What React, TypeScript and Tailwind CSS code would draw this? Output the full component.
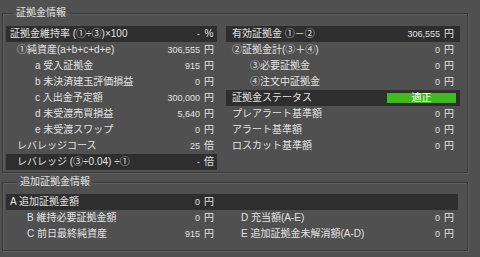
type Row = {
	label: string;
	value?: string;
	unit?: string;
	indent: string;
	dark?: boolean;
	status?: string;
};

const LEFT_ROWS: Row[] = [
	{ label: "証拠金維持率 (①÷③)×100", value: "-", unit: "%", indent: "pl-[4px]", dark: true },
	{ label: "①純資産(a+b+c+d+e)", value: "306,555", unit: "円", indent: "pl-[11px]" },
	{ label: "a 受入証拠金", value: "915", unit: "円", indent: "pl-[29px]" },
	{ label: "b 未決済建玉評価損益", value: "0", unit: "円", indent: "pl-[29px]" },
	{ label: "c 入出金予定額", value: "300,000", unit: "円", indent: "pl-[29px]" },
	{ label: "d 未受渡売買損益", value: "5,640", unit: "円", indent: "pl-[29px]" },
	{ label: "e 未受渡スワップ", value: "0", unit: "円", indent: "pl-[29px]" },
	{ label: "レバレッジコース", value: "25", unit: "倍", indent: "pl-[11px]" },
	{ label: "レバレッジ (③÷0.04) ÷①", value: "-", unit: "倍", indent: "pl-[11px]", dark: true },
];

const RIGHT_ROWS: Row[] = [
	{ label: "有効証拠金 ①－②", value: "306,555", unit: "円", indent: "pl-[6px]", dark: true },
	{ label: "②証拠金計(③＋④)", value: "0", unit: "円", indent: "pl-[6px]" },
	{ label: "③必要証拠金", value: "0", unit: "円", indent: "pl-[24px]" },
	{ label: "④注文中証拠金", value: "0", unit: "円", indent: "pl-[24px]" },
	{ label: "証拠金ステータス", status: "適正", indent: "pl-[6px]", dark: true },
	{ label: "プレアラート基準額", value: "0", unit: "円", indent: "pl-[6px]" },
	{ label: "アラート基準額", value: "0", unit: "円", indent: "pl-[6px]" },
	{ label: "ロスカット基準額", value: "0", unit: "円", indent: "pl-[6px]" },
];

function InfoRow({ row, pr }: { row: Row; pr: string }) {
	return (
		<div
			className={`flex h-[16px] items-center justify-between whitespace-nowrap ${row.indent} ${pr} ${
				row.dark ? "bg-[#2e2e2e]" : ""
			}`}
		>
			<span>{row.label}</span>
			{row.status ? (
				<span className="mr-[-2px] flex h-[10px] w-[69px] items-center justify-center bg-[#3fbb1f] text-[10px] leading-none text-white">
					{row.status}
				</span>
			) : (
				<span className="flex items-center gap-[4px]">
					<span className="text-[9px]">{row.value}</span>
					<span className="w-[10px] text-center">{row.unit}</span>
				</span>
			)}
		</div>
	);
}

export default function App() {
	return (
		<div className="h-[257px] w-[480px] overflow-hidden bg-[#505050] font-['Liberation_Sans','Noto_Sans_CJK_JP',sans-serif] text-[10px] leading-none text-[#e2e2e2]">
			{/* 証拠金情報 */}
			<fieldset className="mx-[2px] mt-[6px] w-[466px] border border-[#3a3a3a] px-[3px] pt-[6px] pb-[2px] shadow-[inset_1px_1px_0_#5e5e5e,1px_1px_0_#5e5e5e]">
				<legend className="ml-[7px] px-[3px] leading-[14px]">証拠金情報</legend>
				<div className="grid grid-cols-[211px_234px] gap-x-[9px]">
					<div className="flex flex-col">
						{LEFT_ROWS.map((r) => (
							<InfoRow key={r.label} row={r} pr="pr-[3px]" />
						))}
					</div>
					<div className="flex flex-col">
						{RIGHT_ROWS.map((r) => (
							<InfoRow key={r.label} row={r} pr="pr-[6px]" />
						))}
					</div>
				</div>
			</fieldset>

			{/* 追加証拠金情報 */}
			<fieldset className="mx-[2px] mt-[2px] w-[466px] border border-[#3a3a3a] px-[3px] pt-[5px] pb-[8px] shadow-[inset_1px_1px_0_#5e5e5e,1px_1px_0_#5e5e5e]">
				<legend className="ml-[11px] px-[3px] leading-[14px]">追加証拠金情報</legend>
				<div className="w-[452px]">
					<div className="grid h-[16px] grid-cols-[211px_241px] items-center bg-[#2e2e2e]">
						<InfoRow row={{ label: "A 追加証拠金額", value: "0", unit: "円", indent: "pl-[4px]" }} pr="pr-[3px]" />
						<span />
					</div>
					<div className="grid grid-cols-[211px_234px] gap-x-[9px]">
						<div className="flex flex-col">
							<InfoRow row={{ label: "B 維持必要証拠金額", value: "0", unit: "円", indent: "pl-[21px]" }} pr="pr-[3px]" />
							<InfoRow row={{ label: "C 前日最終純資産", value: "915", unit: "円", indent: "pl-[21px]" }} pr="pr-[3px]" />
						</div>
						<div className="flex flex-col">
							<InfoRow row={{ label: "D 充当額(A-E)", value: "0", unit: "円", indent: "pl-[15px]" }} pr="pr-[6px]" />
							<InfoRow row={{ label: "E 追加証拠金未解消額(A-D)", value: "0", unit: "円", indent: "pl-[15px]" }} pr="pr-[6px]" />
						</div>
					</div>
				</div>
			</fieldset>
		</div>
	);
}
